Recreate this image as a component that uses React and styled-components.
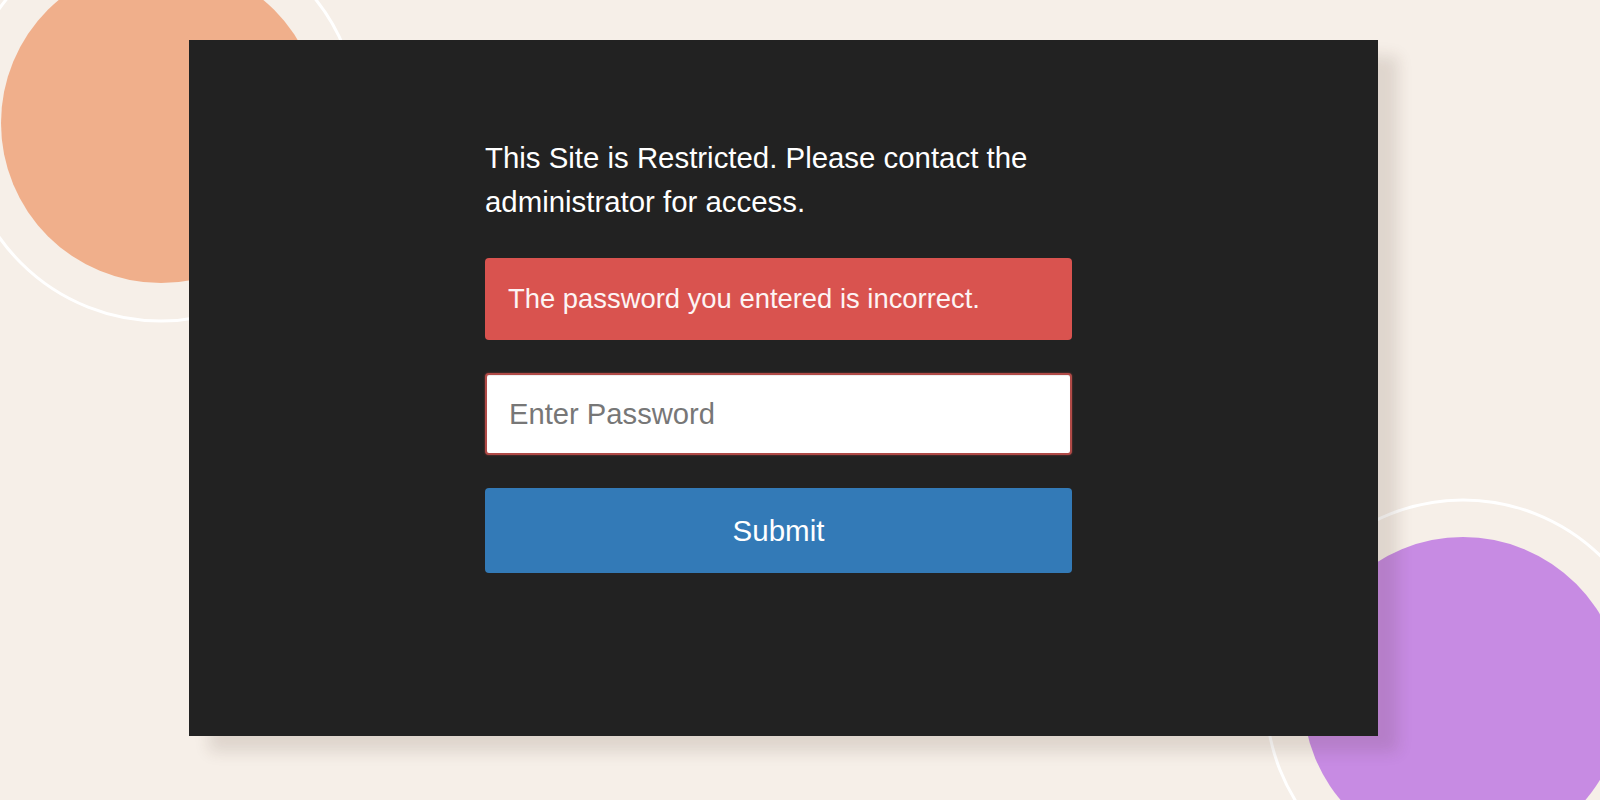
import React from "react";
import styled, { createGlobalStyle } from "styled-components";

const GlobalStyle = createGlobalStyle`
  html, body {
    margin: 0;
    padding: 0;
    background: #f6efe8;
    font-family: "Liberation Sans", Arial, sans-serif;
  }
  * { box-sizing: border-box; }
`;

const Page = styled.div`
  position: relative;
  width: 1600px;
  height: 800px;
  overflow: hidden;
  background: #f6efe8;
  padding: 40px 0 0 189px;
`;

const Decor = styled.svg`
  position: absolute;
  inset: 0;
  width: 1600px;
  height: 800px;
  pointer-events: none;
`;

const Panel = styled.main`
  position: relative;
  width: 1189px;
  height: 696px;
  background: #222222;
  box-shadow: 20px 16px 14px rgba(70, 45, 30, 0.13);
  padding: 96px 0 0 296px;
`;

const Form = styled.form`
  width: 587px;
  display: flex;
  flex-direction: column;
`;

const Message = styled.p`
  margin: 0 0 34px;
  color: #ffffff;
  font-size: 29.4px;
  line-height: 44px;
`;

const Alert = styled.div`
  height: 82px;
  display: flex;
  align-items: center;
  padding: 0 23px;
  margin-bottom: 33px;
  background: #d9534f;
  border-radius: 4px;
  color: #fdf4f4;
  font-size: 27.4px;
`;

const PasswordInput = styled.input`
  height: 82px;
  width: 100%;
  margin: 0 0 33px;
  padding: 0 22px;
  border: 2px solid #b04a47;
  border-radius: 4px;
  background: #ffffff;
  box-shadow: 0 0 2px rgba(217, 83, 79, 0.6), inset 0 1px 1px rgba(0, 0, 0, 0.075);
  font-family: "Liberation Sans", Arial, sans-serif;
  font-size: 29.2px;
  color: #333;
  outline: none;
  &::placeholder {
    color: #777777;
  }
`;

const SubmitButton = styled.button`
  height: 85px;
  width: 100%;
  border: none;
  border-radius: 4px;
  background: #337ab7;
  color: #ffffff;
  font-family: "Liberation Sans", Arial, sans-serif;
  font-size: 29.5px;
  cursor: pointer;
`;

export default function App() {
  return (
    <>
      <GlobalStyle />
      <Page>
        <Decor viewBox="0 0 1600 800" aria-hidden="true">
          <circle cx="161" cy="123" r="160" fill="#f0af8b" />
          <circle cx="161" cy="123" r="198" fill="none" stroke="#ffffff" strokeWidth="3" />
          <circle cx="1463" cy="697" r="160" fill="#c78be3" />
          <circle cx="1463" cy="697" r="197" fill="none" stroke="#ffffff" strokeWidth="3" />
        </Decor>
        <Panel>
          <Form onSubmit={(e) => e.preventDefault()}>
            <Message>
              This Site is Restricted. Please contact the administrator for access.
            </Message>
            <Alert>The password you entered is incorrect.</Alert>
            <PasswordInput type="password" placeholder="Enter Password" />
            <SubmitButton type="submit">Submit</SubmitButton>
          </Form>
        </Panel>
      </Page>
    </>
  );
}
